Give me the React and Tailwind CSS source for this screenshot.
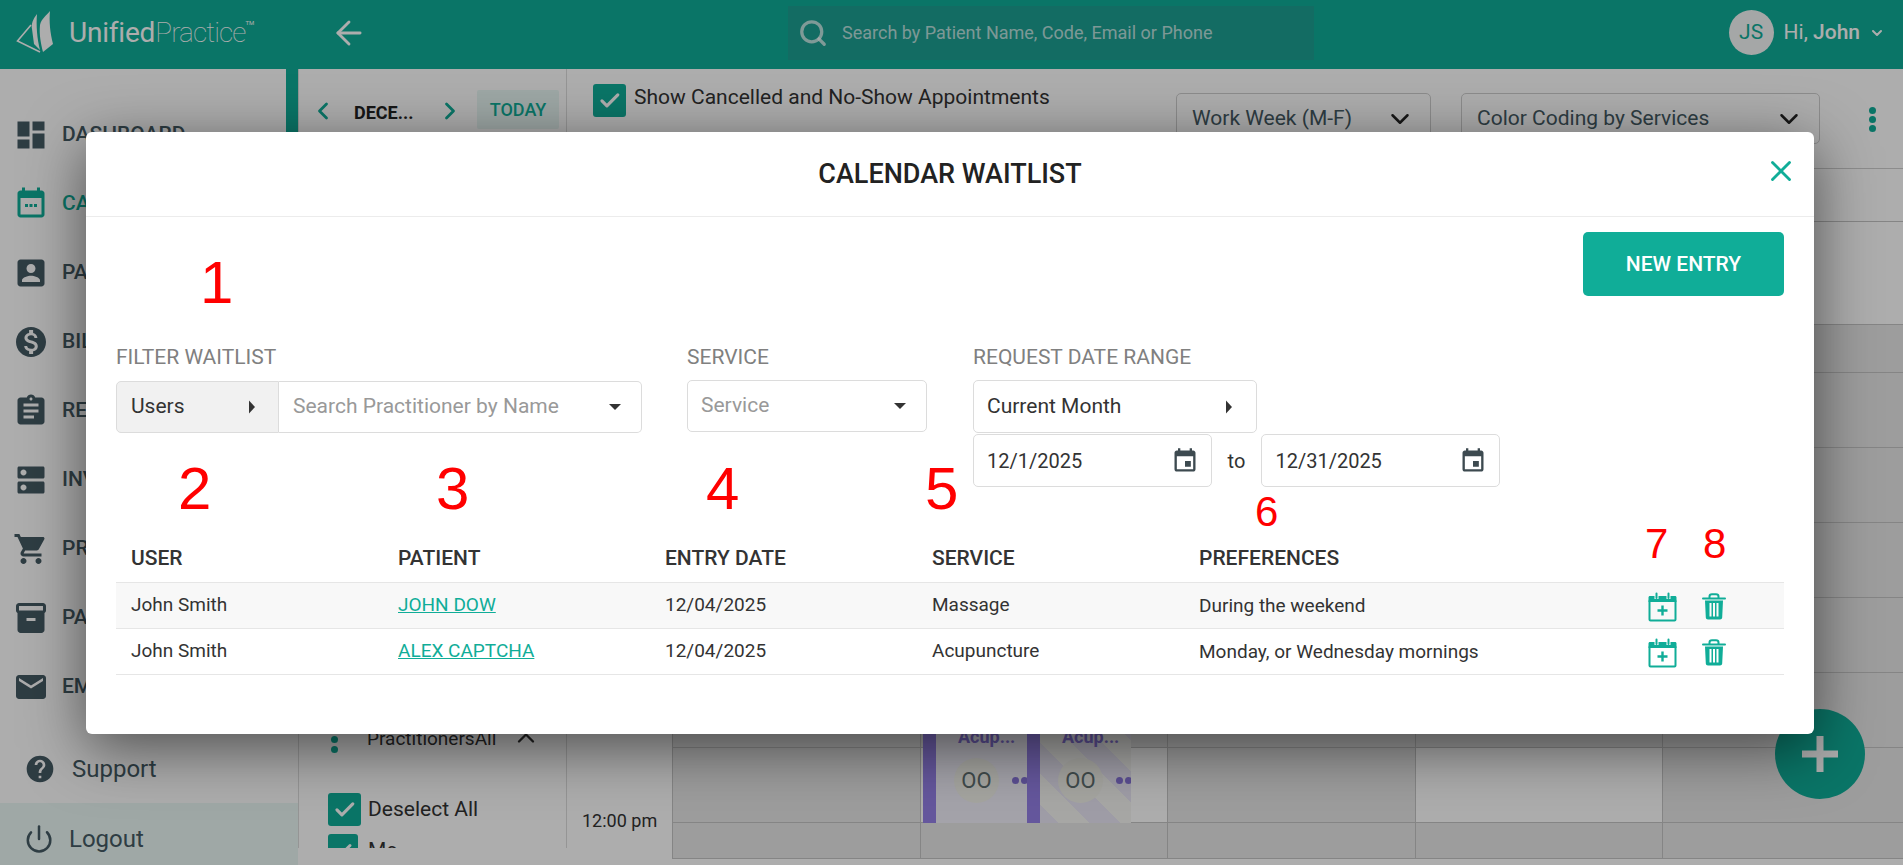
import { Check, ChevronDown, ChevronLeft, ChevronRight, ChevronUp, ArrowLeft, Search, X, Power } from "lucide-react";

const navItems = [
  { label: "DASHBOARD", d: "M3 13h8V3H3v10zm0 8h8v-6H3v6zm10 0h8V11h-8v10zm0-18v6h8V3h-8z" },
  { label: "CALENDAR", active: true, d: "M19 3h-1V1h-2v2H8V1H6v2H5c-1.1 0-2 .9-2 2v14c0 1.1.9 2 2 2h14c1.1 0 2-.9 2-2V5c0-1.1-.9-2-2-2zm0 16H5V8h14v11zM8 12h2v2H8zm3 0h2v2h-2zm3 0h2v2h-2z" },
  { label: "PATIENTS", d: "M3 5v14c0 1.1.89 2 2 2h14c1.1 0 2-.9 2-2V5c0-1.1-.9-2-2-2H5c-1.11 0-2 .9-2 2zm12 4c0 1.66-1.34 3-3 3s-3-1.34-3-3 1.34-3 3-3 3 1.34 3 3zm-9 8c0-2 4-3.1 6-3.1s6 1.1 6 3.1v1H6v-1z" },
  { label: "BILLING", d: "M12 2C6.48 2 2 6.48 2 12s4.48 10 10 10 10-4.48 10-10S17.52 2 12 2zm1.41 16.09V20h-2.67v-1.93c-1.71-.36-3.16-1.46-3.27-3.4h1.96c.1 1.05.82 1.87 2.65 1.87 1.96 0 2.4-.98 2.4-1.59 0-.83-.44-1.61-2.67-2.14-2.48-.6-4.18-1.62-4.18-3.67 0-1.72 1.39-2.84 3.11-3.21V4h2.67v1.95c1.86.45 2.79 1.86 2.85 3.39H14.3c-.05-1.11-.64-1.87-2.22-1.87-1.5 0-2.4.68-2.4 1.64 0 .84.65 1.39 2.67 1.91s4.18 1.39 4.18 3.91c-.01 1.83-1.38 2.83-3.12 3.16z" },
  { label: "REPORTS", d: "M19 3h-4.18C14.4 1.84 13.3 1 12 1c-1.3 0-2.4.84-2.82 2H5c-1.1 0-2 .9-2 2v14c0 1.1.9 2 2 2h14c1.1 0 2-.9 2-2V5c0-1.1-.9-2-2-2zm-7 0c.55 0 1 .45 1 1s-.45 1-1 1-1-.45-1-1 .45-1 1-1zm2 14H7v-2h7v2zm3-4H7v-2h10v2zm0-4H7V7h10v2z" },
  { label: "INVENTORY", d: "M20 13H4c-.55 0-1 .45-1 1v6c0 .55.45 1 1 1h16c.55 0 1-.45 1-1v-6c0-.55-.45-1-1-1zM7 19c-1.1 0-2-.9-2-2s.9-2 2-2 2 .9 2 2-.9 2-2 2zM20 3H4c-.55 0-1 .45-1 1v6c0 .55.45 1 1 1h16c.55 0 1-.45 1-1V4c0-.55-.45-1-1-1zM7 9c-1.1 0-2-.9-2-2s.9-2 2-2 2 .9 2 2-.9 2-2 2z" },
  { label: "PRODUCTS", d: "M7 18c-1.1 0-1.99.9-1.99 2S5.9 22 7 22s2-.9 2-2-.9-2-2-2zM1 2v2h2l3.6 7.59-1.35 2.45c-.16.28-.25.61-.25.96 0 1.1.9 2 2 2h12v-2H7.42c-.14 0-.25-.11-.25-.25l.03-.12.9-1.63h7.45c.75 0 1.41-.41 1.75-1.03l3.58-6.49c.08-.14.12-.31.12-.48 0-.55-.45-1-1-1H5.21l-.94-2H1zm16 16c-1.1 0-1.99.9-1.99 2s.89 2 1.99 2 2-.9 2-2-.9-2-2-2z" },
  { label: "PACKAGES", d: "M20 2H4c-1 0-2 .9-2 2v3.01c0 .72.43 1.34 1 1.69V20c0 1.1 1.1 2 2 2h14c.9 0 2-.9 2-2V8.7c.57-.35 1-.97 1-1.69V4c0-1.1-1-2-2-2zm-5 12H9v-2h6v2zm5-7H4V4h16v3z" },
  { label: "EMAIL", d: "M20 4H4c-1.1 0-1.99.9-1.99 2L2 18c0 1.1.9 2 2 2h16c1.1 0 2-.9 2-2V6c0-1.1-.9-2-2-2zm0 4l-8 5-8-5V6l8 5 8-5v2z" },
];

const gridRows = [
  { white: [1, 1, 1, 1, 1] },
  { white: [1, 1, 1, 1, 1] },
  { white: [0, 0, 0, 0, 0] },
  { white: [0, 0, 0, 0, 0] },
  { white: [0, 0, 0, 0, 0] },
  { white: [0, 0, 0, 0, 0] },
  { white: [0, 0, 0, 0, 0] },
  { white: [0, 0, 0, 0, 0] },
  { white: [0, 1, 0, 1, 0], cards: true, time: "12:00 pm" },
  { white: [0, 0, 0, 0, 0] },
];

const waitlist = [
  { user: "John Smith", patient: "JOHN DOW", date: "12/04/2025", service: "Massage", prefs: "During the weekend", striped: true },
  { user: "John Smith", patient: "ALEX CAPTCHA", date: "12/04/2025", service: "Acupuncture", prefs: "Monday, or Wednesday mornings" },
];

const annotations = [
  { n: "1", className: "left-[200px] top-[253px] text-[60px]" },
  { n: "2", className: "left-[178px] top-[459px] text-[60px]" },
  { n: "3", className: "left-[436px] top-[459px] text-[60px]" },
  { n: "4", className: "left-[706px] top-[459px] text-[60px]" },
  { n: "5", className: "left-[925px] top-[459px] text-[60px]" },
  { n: "6", className: "left-[1255px] top-[491px] text-[42px]" },
  { n: "7", className: "left-[1645px] top-[523px] text-[42px]" },
  { n: "8", className: "left-[1703px] top-[523px] text-[42px]" },
];

const Tick = ({ className }) => (
  <span className={`flex items-center justify-center rounded-[3px] bg-[#10ad98] ${className}`}>
    <Check className="w-[72%] h-[72%] text-white" strokeWidth={3.2} />
  </span>
);

const Caret = ({ right }) => (
  <svg width="16" height="16" viewBox="0 0 16 16" className="text-[#333] shrink-0">
    {right ? <path d="M5 1.500 L11 8 L5 14.500 Z" fill="currentColor" /> : <path d="M2 5 L14 5 L8 11 Z" fill="currentColor" />}
  </svg>
);

const EventIcon = () => (
  <svg width="28" height="28" viewBox="0 0 24 24" className="text-[#3d4a50] shrink-0">
    <path fill="currentColor" d="M17 12h-5v5h5v-5zM16 1v2H8V1H6v2H5c-1.11 0-1.99.9-1.99 2L3 19c0 1.1.89 2 2 2h14c1.1 0 2-.9 2-2V5c0-1.1-.9-2-2-2h-1V1h-2zm3 18H5V8h14v11z" />
  </svg>
);

const AddToCalendarIcon = () => (
  <svg width="29" height="31" viewBox="0 0 29 31" className="shrink-0 text-[#10ad98]">
    <path fill="currentColor" d="M2 5h4.5v3.5h4V5h8v3.5h4V5H27c1 0 1.5.6 1.5 1.5V11H.5V6.500C.5 5.600 1 5 2 5z" />
    <path fill="none" stroke="currentColor" strokeWidth="2" strokeLinecap="round" d="M8.500 7V2.500M20.500 7V2.500" />
    <rect x="1.500" y="9" width="26" height="20.500" rx="1" fill="none" stroke="currentColor" strokeWidth="2" />
    <path fill="none" stroke="currentColor" strokeWidth="2.400" d="M14.500 14.500v10M9.500 19.500h10" />
  </svg>
);

const TrashIcon = () => (
  <svg width="24" height="27" viewBox="0 0 24 27" className="shrink-0 text-[#10ad98]">
    <path fill="none" stroke="currentColor" strokeWidth="2" d="M7.500 5V3.500C7.500 2 8.500 1.200 10 1.200h4c1.500 0 2.500.8 2.500 2.300V5" />
    <path fill="none" stroke="currentColor" strokeWidth="2" strokeLinecap="round" d="M1 5.500h22" />
    <path fill="currentColor" fillRule="evenodd" d="M3 7.500h18l-.8 17c-.1 1.300-.9 2-2.200 2H6c-1.300 0-2.100-.7-2.200-2zM7.500 10v13.500h2V10zM11 10v13.500h2V10zM14.500 10v13.500h2V10z" />
  </svg>
);

const LogoMark = () => (
  <svg width="38" height="43" viewBox="0 0 38 43" className="shrink-0 text-[#ffffff]">
    <path fill="none" stroke="currentColor" strokeWidth="1.600" d="M15 14 L1.500 30 L24 41" />
    <path fill="currentColor" d="M21 3 C17 8 15 13 16 18 L18 33 L24 39 C21 28 20 14 21 3z" />
    <path fill="currentColor" d="M34 0 C31 4 25 8 24 14 C23 24 25 33 27 41 L37 33 C34 22 33 10 34 0z" />
  </svg>
);

const Sidebar = () => (
  <aside className="w-[298px] h-full shrink-0 flex flex-col pt-[31px] bg-white">
    <nav className="flex flex-col">
      {navItems.map((item) => (
        <div key={item.label} className={`h-[69px] w-[286px] flex items-center gap-[13px] pl-[13px] text-[21px] font-medium ${item.active ? "text-[#10ad98]" : "text-[#455a64]"}`}>
          <svg width="36" height="36" viewBox="0 0 24 24" className="shrink-0">
            <path fill="currentColor" d={item.d} />
          </svg>
          <span>{item.label}</span>
        </div>
      ))}
    </nav>
    <div className="mt-auto mb-[3px] h-[62px] flex items-center gap-[16px] pl-[24px] text-[24px] text-[#455a64]">
      <svg width="32" height="32" viewBox="0 0 24 24" className="shrink-0">
        <path fill="currentColor" d="M12 2C6.48 2 2 6.48 2 12s4.48 10 10 10 10-4.48 10-10S17.52 2 12 2zm1 17h-2v-2h2v2zm2.070-7.750l-.9.920C13.450 12.900 13 13.500 13 15h-2v-.5c0-1.100.45-2.100 1.170-2.830l1.240-1.260c.37-.36.59-.86.59-1.410 0-1.100-.9-2-2-2s-2 .9-2 2H8c0-2.210 1.790-4 4-4s4 1.790 4 4c0 .88-.36 1.680-.93 2.250z" />
      </svg>
      <span>Support</span>
    </div>
    <div className="h-[62px] pt-[9px] bg-[#eaf8f5] flex items-center gap-[15px] pl-[24px] text-[24px] text-[#455a64]">
      <Power className="w-[30px] h-[30px] shrink-0" strokeWidth={2} />
      <span>Logout</span>
    </div>
  </aside>
);

const PractitionerPanel = () => (
  <section className="w-[269px] h-[779px] shrink-0 overflow-hidden border-l border-r border-[#dcdcdc] bg-white">
    <div className="flex items-center pt-[21px] pl-[10px]">
      <ChevronLeft className="mt-[3px] w-[28px] h-[32px] text-[#10ad98]" strokeWidth={2.4} />
      <span className="ml-[17px] w-[60px] pt-[5px] text-[18px] font-bold text-[#222]">DECE...</span>
      <ChevronRight className="mt-[3px] ml-[22px] w-[28px] h-[32px] text-[#10ad98]" strokeWidth={2.4} />
      <span className="ml-[13px] w-[82px] h-[39px] flex items-center justify-center rounded-[2px] bg-[#e8f7f4] text-[18px] font-medium text-[#10ad98]">TODAY</span>
    </div>
    <div className="mt-[590px] flex items-center pl-[32px] h-[40px]">
      <span className="flex flex-col gap-[3px]">
        <span className="w-[7px] h-[7px] rounded-full bg-[#10ad98]" />
        <span className="w-[7px] h-[7px] rounded-full bg-[#10ad98]" />
        <span className="w-[7px] h-[7px] rounded-full bg-[#10ad98]" />
      </span>
      <span className="ml-[29px] text-[19px] text-[#333]">PractitionersAll</span>
      <ChevronUp className="ml-[16px] -mt-[3px] w-[28px] h-[28px] text-[#333]" />
    </div>
    <div className="mt-[34px] flex items-center pl-[29px] gap-[7px]">
      <Tick className="w-[33px] h-[33px]" />
      <span className="text-[21px] text-[#333]">Deselect All</span>
    </div>
    <div className="mt-[8px] flex items-center pl-[29px] gap-[10px]">
      <Tick className="w-[30px] h-[33px]" />
      <span className="text-[21px] text-[#333]">Me</span>
    </div>
  </section>
);

const Select = ({ label, className }) => (
  <div className={`h-[51px] flex items-center justify-between rounded-[5px] border border-[#cfcfcf] bg-white px-[15px] ${className}`}>
    <span className="text-[21px] text-[#455a64]">{label}</span>
    <ChevronDown className="w-[30px] h-[30px] text-[#222]" strokeWidth={2} />
  </div>
);

const Appointment = ({ striped }) => (
  <div className={`w-[104px] h-full flex overflow-hidden ${striped ? "bg-[repeating-linear-gradient(45deg,#eae7f6_0,#eae7f6_22px,#f6f6f3_22px,#f6f6f3_44px)]" : "bg-[#f2f0fb]"}`}>
    <span className="w-[13px] h-full shrink-0 bg-[#9580e8]" />
    <div className="flex-1 flex flex-col justify-end pb-[20px] overflow-hidden">
      <span className="pl-[22px] text-[18px] font-bold leading-[22px] text-[#8674d8] whitespace-nowrap mb-[10px]">Acup...</span>
      <div className="pl-[18px] flex items-center gap-[13px]">
        <span className="w-[45px] h-[45px] shrink-0 rounded-full bg-[#f3f3ec] flex items-center justify-center text-[22px] text-[#5f6f70]">OO</span>
        <span className="flex gap-[2px] shrink-0">
          <span className="w-[7px] h-[7px] rounded-full bg-[#8674d8]" />
          <span className="w-[7px] h-[7px] rounded-full bg-[#8674d8]" />
        </span>
      </div>
    </div>
  </div>
);

const CalendarGrid = () => (
  <div className="grid grid-cols-[105px_248px_247px_248px_247px_1fr] grid-rows-[53px_103px_48px_75px_75px_75px_75px_75px_75px_36px]">
    {gridRows.map((row, r) => (
      <div key={r} className="contents">
        <div className="relative">
          {row.time && <span className="absolute left-[15px] bottom-[-11px] text-[18px] text-[#333] whitespace-nowrap">{row.time}</span>}
        </div>
        {row.white.map((w, c) => (
          <div key={c} className={`relative border-l border-b border-[#c4c4c4] ${w ? "bg-white" : "bg-[#e8e8e8]"}`}>
            {row.cards && c === 1 && (
              <div className="absolute left-[2px] bottom-[-1px] h-[150px] flex">
                <Appointment />
                <Appointment striped />
              </div>
            )}
          </div>
        ))}
      </div>
    ))}
  </div>
);

const SchedulePane = () => (
  <section className="flex-1 min-w-0 bg-white">
    <div className="h-[100px] relative border-b border-[#cfcfcf] flex">
      <div className="pl-[26px] pt-[15px] flex items-start gap-[8px]">
        <Tick className="w-[33px] h-[33px]" />
        <span className="text-[21px] leading-[26px] text-[#333] whitespace-nowrap">Show Cancelled and No-Show Appointments</span>
      </div>
      <div className="ml-auto pt-[24px] pr-[27px] flex items-start">
        <Select label="Work Week (M-F)" className="w-[255px]" />
        <Select label="Color Coding by Services" className="w-[359px] ml-[30px]" />
        <span className="ml-[49px] mt-[14px] flex flex-col gap-[2px]">
          <span className="w-[7px] h-[7px] rounded-full bg-[#10ad98]" />
          <span className="w-[7px] h-[7px] rounded-full bg-[#10ad98]" />
          <span className="w-[7px] h-[7px] rounded-full bg-[#10ad98]" />
        </span>
      </div>
    </div>
    <CalendarGrid />
  </section>
);

const TopBar = () => (
  <header className="h-[69px] shrink-0 pb-[4px] bg-[#10ad98] flex items-center text-white">
    <div className="w-[298px] flex items-center pl-[16px]">
      <LogoMark />
      <span className="ml-[15px] text-[28px] tracking-[-0.2px] leading-none whitespace-nowrap">
        Unified<span className="font-thin tracking-[-0.9px]">Practice</span>
        <sup className="text-[6px] align-[14px]">TM</sup>
      </span>
    </div>
    <ArrowLeft className="ml-[32px] w-[38px] h-[38px]" strokeWidth={1.8} />
    <div className="ml-[420px] w-[526px] h-[54px] flex items-center pl-[10px] bg-[#1da093] text-white/70">
      <Search className="w-[30px] h-[30px]" strokeWidth={2.6} />
      <span className="ml-[14px] text-[18px]">Search by Patient Name, Code, Email or Phone</span>
    </div>
    <div className="ml-auto pr-[18px] flex items-center">
      <span className="w-[45px] h-[45px] rounded-full bg-[#f3f6f6] flex items-center justify-center text-[21px] text-[#10ad98]">JS</span>
      <span className="ml-[10px] text-[21px]">Hi, <span className="font-medium">John</span></span>
      <ChevronDown className="ml-[9px] w-[16px] h-[16px]" strokeWidth={3} />
    </div>
  </header>
);

const FilterBar = () => (
  <div className="mt-[49px] flex items-start gap-[46px] text-[21px]">
    <div className="w-[526px]">
      <p className="h-[24px] leading-[24px] text-[21px] text-[#808080]">FILTER WAITLIST</p>
      <div className="mt-[12px] h-[52px] flex">
        <div className="w-[163px] flex items-center justify-between pl-[14px] pr-[18px] bg-[#f1f1f1] border border-[#dcdcdc] rounded-l-[5px] text-[#333]">
          <span>Users</span>
          <Caret right />
        </div>
        <div className="flex-1 flex items-center justify-between pl-[14px] pr-[18px] border-y border-r border-[#dcdcdc] rounded-r-[5px] text-[#999]">
          <span>Search Practitioner by Name</span>
          <Caret />
        </div>
      </div>
    </div>
    <div className="w-[240px] -ml-[1px]">
      <p className="h-[24px] leading-[24px] text-[21px] text-[#808080]">SERVICE</p>
      <div className="mt-[11px] h-[52px] flex items-center justify-between pl-[13px] pr-[18px] border border-[#dcdcdc] rounded-[5px] text-[#999]">
        <span>Service</span>
        <Caret />
      </div>
    </div>
    <div className="w-[527px]">
      <p className="h-[24px] leading-[24px] text-[21px] text-[#808080]">REQUEST DATE RANGE</p>
      <div className="mt-[11px] w-[284px] h-[53px] flex items-center justify-between pl-[13px] pr-[19px] border border-[#dcdcdc] rounded-[5px] text-[#333]">
        <span>Current Month</span>
        <Caret right />
      </div>
      <div className="mt-[1px] flex items-center text-[20px] text-[#333]">
        <div className="w-[239px] h-[53px] flex items-center justify-between pl-[13px] pr-[12px] border border-[#dcdcdc] rounded-[5px]">
          <span>12/1/2025</span>
          <EventIcon />
        </div>
        <span className="w-[50px] text-center">to</span>
        <div className="w-[239px] h-[53px] flex items-center justify-between pl-[13px] pr-[12px] border border-[#dcdcdc] rounded-[5px]">
          <span>12/31/2025</span>
          <EventIcon />
        </div>
      </div>
    </div>
  </div>
);

const WaitlistTable = () => (
  <div className="mt-[45px]">
    <div className="h-[51px] pt-[3px] grid grid-cols-[267px_267px_267px_267px_450px_1fr] items-center text-[21px] font-medium text-[#333] border-b border-[#e6e6e6]">
      {["USER", "PATIENT", "ENTRY DATE", "SERVICE", "PREFERENCES"].map((h) => (
        <span key={h} className="pl-[15px]">{h}</span>
      ))}
    </div>
    {waitlist.map((row) => (
      <div key={row.patient} className={`h-[46px] grid grid-cols-[267px_267px_267px_267px_450px_1fr] items-center text-[19px] text-[#333] border-b border-[#e6e6e6] ${row.striped ? "bg-[#f8f8f8]" : "bg-white"}`}>
        <span className="pl-[15px]">{row.user}</span>
        <a className="pl-[15px] text-[#10ad98] underline">{row.patient}</a>
        <span className="pl-[15px]">{row.date}</span>
        <span className="pl-[15px]">{row.service}</span>
        <span className="pl-[15px] pt-[2px]">{row.prefs}</span>
        <span className="flex items-center pl-[14px] gap-[25px] pt-[2px]">
          <AddToCalendarIcon />
          <TrashIcon />
        </span>
      </div>
    ))}
  </div>
);

const WaitlistModal = () => (
  <div className="absolute left-[86px] top-[132px] w-[1728px] h-[602px] rounded-[6px] bg-white shadow-[0_14px_60px_rgba(0,0,0,0.55)] z-20">
    <div className="relative h-[85px] pt-[1px] border-b border-[#ececec] flex items-center justify-center">
      <h2 className="text-[27px] font-medium text-[#222]">CALENDAR WAITLIST</h2>
      <X className="absolute right-[16px] top-[22px] w-[34px] h-[34px] text-[#10ad98]" strokeWidth={2} />
    </div>
    <div className="px-[30px]">
      <div className="pt-[15px] flex justify-end">
        <button className="w-[201px] h-[64px] pt-[1px] rounded-[5px] bg-[#10ad98] text-[21px] font-medium text-white">NEW ENTRY</button>
      </div>
      <FilterBar />
      <WaitlistTable />
    </div>
  </div>
);

const Fab = () => (
  <div className="absolute left-[1775px] top-[709px] w-[90px] h-[90px] rounded-full bg-[#10ad98] flex items-center justify-center">
    <svg width="36" height="36" viewBox="0 0 36 36">
      <path fill="#fff" d="M14.500 0h7v14.500H36v7H21.500V36h-7V21.500H0v-7h14.500z" />
    </svg>
  </div>
);

export default function App() {
  return (
    <div className="relative w-screen h-screen overflow-hidden bg-white font-['Roboto',sans-serif]">
      <div className="h-full flex flex-col">
        <TopBar />
        <div className="flex-1 min-h-0 flex">
          <Sidebar />
          <PractitionerPanel />
          <SchedulePane />
        </div>
      </div>
      <span className="absolute left-[286px] top-[69px] w-[12px] h-[300px] bg-[#10ad98]" />
      <Fab />
      <div className="absolute inset-0 bg-black/32 z-10" />
      <WaitlistModal />
      {annotations.map((a) => (
        <span key={a.n} className={`absolute z-30 leading-none text-[#ff0000] font-['Liberation_Sans',sans-serif] ${a.className}`}>{a.n}</span>
      ))}
    </div>
  );
}
